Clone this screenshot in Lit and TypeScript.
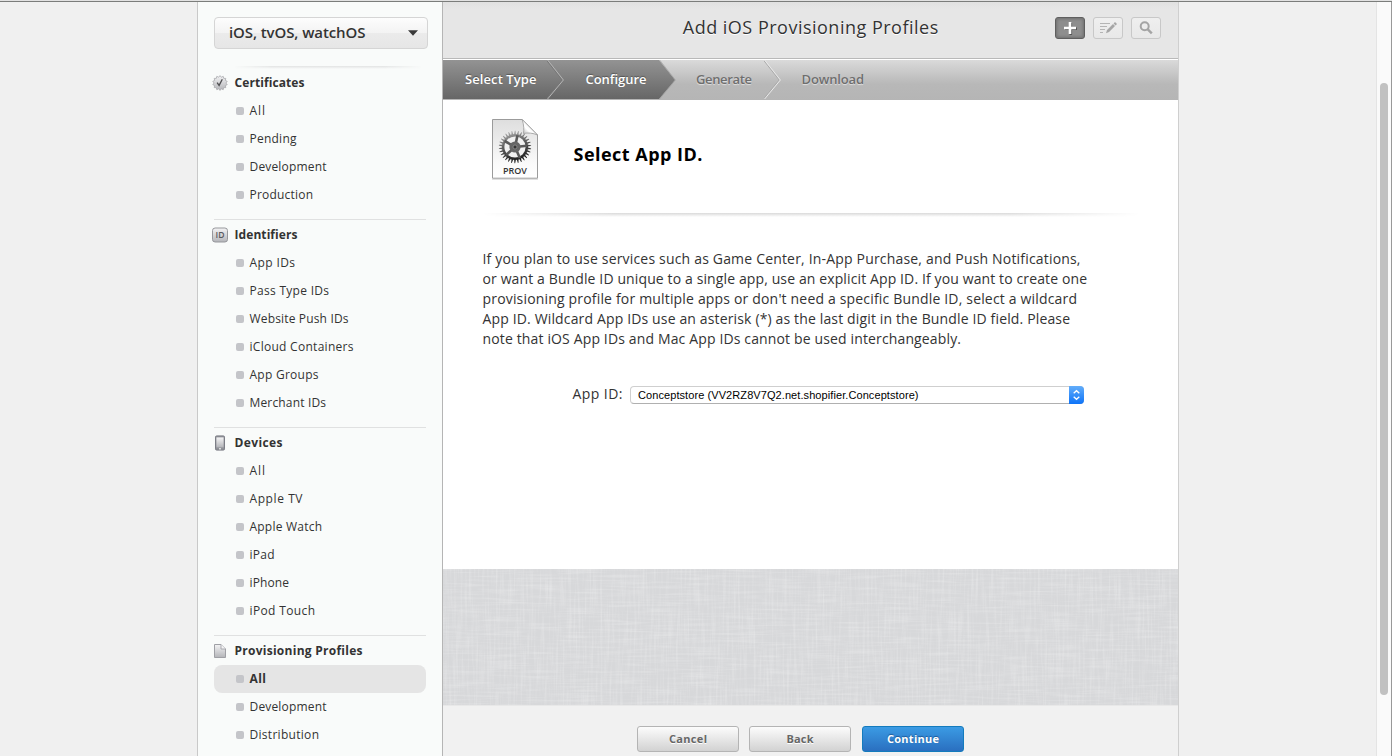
import { LitElement, html, svg, css } from "lit";
import { customElement, property } from "lit/decorators.js";

/** A one-line label whose tracking is set so that it fills the given measure. */
@customElement("tracked-label")
class TrackedLabel extends LitElement {
  @property() text = "";
  @property({ type: Number }) measure = 0;

  static styles = css`
    :host { display: inline-block; white-space: nowrap; }
  `;

  render() {
    return html`<span>${this.text}</span>`;
  }

  updated() {
    const span = this.renderRoot.querySelector("span")!;
    span.style.letterSpacing = "0px";
    const natural = span.getBoundingClientRect().width;
    const gaps = Math.max(1, this.text.length - 1);
    span.style.letterSpacing = (this.measure - natural) / gaps + "px";
    this.style.width = this.measure + "px";
  }
}

const label = (text: string, measure: number) =>
  html`<tracked-label .text=${text} .measure=${measure}></tracked-label>`;

const sealPoints = Array.from({ length: 28 }, (_, i) => {
  const r = i % 2 ? 5.9 : 7.4;
  const a = (i * Math.PI) / 14;
  return `${(8 + r * Math.sin(a)).toFixed(2)},${(8 - r * Math.cos(a)).toFixed(2)}`;
}).join(" ");

const gearPoints = Array.from({ length: 30 }, (_, i) => {
  const p = (r: number, d: number) => {
    const a = ((i + d) * Math.PI) / 15;
    return `${(r * Math.sin(a)).toFixed(2)},${(-r * Math.cos(a)).toFixed(2)}`;
  };
  return `${p(13, -0.3)} ${p(16.2, -0.05)} ${p(16.2, 0.15)} ${p(13, 0.3)}`;
}).join(" ");

const shade = svg`<defs><linearGradient id="g" x1="0" y1="0" x2="0" y2="1">
  <stop offset="0" stop-color="#f4f4f5"/><stop offset="1" stop-color="#b4b5b9"/></linearGradient></defs>`;

const icons: Record<string, unknown> = {
  seal: html`<svg width="16" height="16" viewBox="0 0 16 16">${shade}
    <polygon points=${sealPoints} fill="url(#g)" stroke="#a9aaad" stroke-width=".8"/>
    <path d="M5.1 7.6 7.1 10.4 10.3 4.2" fill="none" stroke="#505052" stroke-width="1.3"/></svg>`,
  id: html`<svg width="16" height="16" viewBox="0 0 16 16">${shade}
    <rect x=".5" y="1" width="15" height="14" rx="2.6" fill="url(#g)" stroke="#97989c"/>
    <text x="8" y="11.1" text-anchor="middle" font-family="Open Sans, sans-serif" font-weight="600" font-size="8.6" fill="#58595d">ID</text></svg>`,
  device: html`<svg width="16" height="16" viewBox="0 0 16 16">${shade}
    <rect x="3.500" y=".9" width="9" height="14.200" rx="1.200" fill="#909298" stroke="#7c7e86"/>
    <rect x="4.400" y="2.400" width="7.200" height="10" fill="url(#g)"/>
    <rect x="7" y="13.200" width="2" height="1.200" fill="#eee"/></svg>`,
  page: html`<svg width="16" height="16" viewBox="0 0 16 16">${shade}
    <path d="M2.500 1.500H9L13.500 6V14.500H2.500Z" fill="url(#g)" stroke="#9fa0a5"/>
    <path d="M9 1.500V6H13.500" fill="#f4f4f5" stroke="#a3a4a9" stroke-width=".9"/></svg>`,
};

type Row = [text: string, measure: number];
const sections: { icon: string; title: Row; rows: Row[]; selected?: number }[] = [
  { icon: "seal", title: ["Certificates", 70],
    rows: [["All", 15.5], ["Pending", 47], ["Development", 77], ["Production", 63.5]] },
  { icon: "id", title: ["Identifiers", 63],
    rows: [["App IDs", 45.5], ["Pass Type IDs", 79.5], ["Website Push IDs", 99],
      ["iCloud Containers", 104], ["App Groups", 69], ["Merchant IDs", 76.5]] },
  { icon: "device", title: ["Devices", 48],
    rows: [["All", 15.5], ["Apple TV", 53], ["Apple Watch", 72.5], ["iPad", 25], ["iPhone", 39.5], ["iPod Touch", 65.5]] },
  { icon: "page", title: ["Provisioning Profiles", 128], selected: 0,
    rows: [["All", 16.5], ["Development", 77], ["Distribution", 69.5]] },
];

const steps: { text: Row; state: string; width: number; pad: number }[] = [
  { text: ["Select Type", 71.5], state: "done", width: 104, pad: 22 },
  { text: ["Configure", 61], state: "now", width: 112, pad: 38.5 },
  { text: ["Generate", 56], state: "next", width: 105, pad: 37 },
  { text: ["Download", 62.5], state: "next last", width: 120, pad: 37.5 },
];

const paragraph: Row[] = [
  ["If you plan to use services such as Game Center, In-App Purchase, and Push Notifications,", 598],
  ["or want a Bundle ID unique to a single app, use an explicit App ID. If you want to create one", 604.5],
  ["provisioning profile for multiple apps or don't need a specific Bundle ID, select a wildcard", 594.5],
  ["App ID. Wildcard App IDs use an asterisk (*) as the last digit in the Bundle ID field. Please", 587.5],
  ["note that iOS App IDs and Mac App IDs cannot be used interchangeably.", 478.5],
];

@customElement("side-nav")
class SideNav extends LitElement {
  static styles = css`
    :host { display: block; box-sizing: border-box; width: 246px; padding: 15px 15px 0 16px;
      background: #f9fbfa; border-left: 1px solid #c9c9c9; border-right: 1px solid #b5b5b5;
      color: #333; font-size: 12px; }
    .picker { display: flex; align-items: center; justify-content: space-between; box-sizing: border-box;
      width: 214px; height: 32px; padding: 0 9px 1px 14px; border: 1px solid #d5d5d5; border-radius: 4px;
      background: linear-gradient(#fdfdfd, #f3f3f3 50%, #ebebeb 51%, #e6e6e6);
      font-size: 15px; font-weight: 600; color: #333; }
    .picker tracked-label { padding-bottom: 1px; }
    .picker svg { margin-top: 1px; }
    .rule { height: 3px; margin: 17px 5px 0 20px; background: linear-gradient(#e2e3e3, #f9fbfa);
      mask-image: linear-gradient(90deg, transparent, #000 20%, #000 80%, transparent); }
    section { width: 212px; }
    section + section { border-top: 1px solid #e0e1e1; margin-top: 10px; padding-top: 1px; }
    .title, .row { display: flex; align-items: center; height: 28px; }
    .title { font-weight: 700; margin-left: -2px; gap: 6.500px; color: #333; }
    .title tracked-label, .row tracked-label { padding-bottom: 2px; }
    .row { box-sizing: border-box; padding-left: 22px; gap: 5.500px; }
    .row::before { content: ""; width: 8px; height: 8px; border-radius: 2px; background: #c4c5c9; }
    .selected { background: #e5e5e5; border-radius: 8px; font-weight: 700; }
    svg { display: block; }
  `;
  render() {
    return html`
      <div class="picker">${label("iOS, tvOS, watchOS", 136.5)}
        <svg width="10" height="6" viewBox="0 0 10 6"><path d="M0 .3H10L5 5.700Z" fill="#3a3a3a"/></svg></div>
      <div class="rule"></div>
      ${sections.map((s) => html`<section>
        <div class="title">${icons[s.icon]}${label(...s.title)}</div>
        ${s.rows.map((r, i) => html`<div class="row ${i === s.selected ? "selected" : ""}">${label(...r)}</div>`)}
      </section>`)}`;
  }
}

@customElement("app-root")
class AppRoot extends LitElement {
  static styles = css`
    :host { display: flex; flex-direction: column; box-sizing: border-box; height: 756px; overflow: hidden;
      background: #f0f0f0; font-family: "Open Sans", "Noto Sans", sans-serif; color: #333; }
    .edge { flex: none; height: 1px; background: #e2e2e2; border-bottom: 1px solid #7b7d7b; }
    .body { flex: 1; display: flex; min-height: 0; }
    side-nav { flex: none; margin-left: 197px; }
    main { flex: none; width: 735px; display: flex; flex-direction: column; border-right: 1px solid #cfcfcf; }
    .track { margin-left: auto; width: 14px; background: #fafafa; border-left: 1px solid #e4e4e4;
      border-right: 1px solid #999; }
    .thumb { width: 8px; height: 612px; margin: 81px 0 0 3px; border-radius: 4px; background: #c1c1c1; }
    header { display: grid; grid-template-columns: 1fr auto 1fr; height: 56px; background: linear-gradient(#e1e1e1, #e6e6e6 7px);
      border-bottom: 1px solid #b9b9b9; box-shadow: 0 1px #fff; }
    h1 { grid-column: 2; margin: 0; font-size: 18px; font-weight: 400; line-height: 51px; color: #333;
      text-shadow: 0 1px #fff; }
    .tools { display: flex; justify-content: flex-end; gap: 8px; padding: 15px 17px 0 0; }
    .tool { display: grid; place-items: center; box-sizing: border-box; width: 30px; height: 22px;
      border: 1px solid #c8c8c8; border-radius: 3px; background: linear-gradient(#efefef, #e8e8e8); }
    .add { border-color: #5f5f5f; background: #8e8e8e; box-shadow: inset 0 0 3px 1px #6f6f6f; }
    .wizard { display: flex; height: 40px; margin-top: 1px; background: linear-gradient(#dadada, #b8b8b8 60%, #b5b5b5); }
    .step { position: relative; display: flex; align-items: center; box-sizing: border-box; height: 39px;
      font-size: 13px; font-weight: 600; color: #6e6e6e; text-shadow: 0 1px 1px rgba(255,255,255,.6); }
    .done, .now { background: linear-gradient(#939393, #666); color: #fff; text-shadow: 0 -1px 1px rgba(0,0,0,.35); }
    .chevron { position: absolute; left: 100%; top: 0; z-index: 1; }
    .last .chevron { display: none; }
    .step tracked-label { margin-top: -1px; }
    .panel { height: 469px; background: #fff; }
    .intro { display: flex; padding: 17px 0 0 47px; height: 95px; }
    h2 { margin: 23px 0 0 33.500px; font-size: 18px; line-height: 28px; font-weight: 700; color: #000; }
    .rule { height: 4px; margin: 1px 38px 0 39px; background: linear-gradient(#dadada, #fff);
      mask-image: linear-gradient(90deg, transparent, #000 20%, #000 80%, transparent); }
    .copy { margin: 32px 0 0 39.500px; font-size: 14px; line-height: 20px; }
    .copy tracked-label { display: block; }
    .field { display: flex; align-items: center; margin: 35px 0 0 129.500px; height: 20px; font-size: 14px; gap: 7.500px; }
    .field > tracked-label { padding-bottom: 2px; }
    .select { display: flex; justify-content: space-between; box-sizing: border-box; width: 454px; height: 18px; margin-top: 2px;
      border: 1px solid #cfcfcf; border-bottom-color: #b0b0b0; border-radius: 4px; padding-left: 7px;
      font: 11px/16px "Liberation Sans", sans-serif; color: #000; }
    .arrows { margin: -1px; width: 15px; height: 18px; border-radius: 0 4px 4px 0; background: linear-gradient(#62adfa, #0d73f8); }
    .linen { display: block; width: 735px; height: 136px; background: #d7d8da; }
    footer { flex: 1; display: flex; align-items: flex-start; padding: 20px 0 0 184px; border-top: 1px solid #e8e8e8;
      background: #f1f1f1; }
    button { box-sizing: border-box; width: 102px; height: 26px; padding: 0; margin-left: 10px; border: 1px solid #b4b4b4;
      border-radius: 3px; background: linear-gradient(#fcfcfc, #d2d2d2); color: #666;
      font: 700 11px/24px "Open Sans", sans-serif; text-shadow: 0 1px #fff; }
    .primary { margin-left: 11px; border-color: #147bbd; background: linear-gradient(#3b9be4, #2a6fc0); color: #fff;
      text-shadow: 0 -1px 1px rgba(0,40,90,.5); }
  `;

  chevron(state: string) {
    const now = state === "now";
    const fill = state === "done" || now ? "url(#dark)" : "none";
    return html`<svg class="chevron" width="17" height="39" viewBox="0 0 17 39">
      <defs><linearGradient id="dark" x1="0" y1="0" x2="0" y2="1"><stop offset="0" stop-color="#939393"/><stop offset="1" stop-color="#666"/></linearGradient></defs>
      <path d="M0 0 16 20 0 39Z" fill=${fill}/>
      ${now ? svg`<path d="M.6 0 16.400 20 .6 39" fill="none" stroke="#999" stroke-opacity=".6"/>` : svg`
        <path d="M-.6 0 15.200 20-.6 39" fill="none" stroke=${state === "done" ? "#777" : "#aaa"}/>
        <path d="M.6 0 16.400 20 .6 39" fill="none" stroke=${state === "done" ? "#b5b5b5" : "#e9e9e9"}/>`}
    </svg>`;
  }

  documentIcon() {
    return html`<svg width="50" height="64" viewBox="0 0 50 64">
      <defs>
        <linearGradient id="sheet" x1="0" y1="0" x2="0" y2="1"><stop offset="0" stop-color="#dedede"/><stop offset=".75" stop-color="#fafafa"/><stop offset="1" stop-color="#fff"/></linearGradient>
        <linearGradient id="metal" x1="0" y1="0" x2=".3" y2="1"><stop offset="0" stop-color="#bbb"/><stop offset=".5" stop-color="#606060"/><stop offset="1" stop-color="#1d1d1d"/></linearGradient>
        <linearGradient id="fold" x1="0" y1="1" x2="1" y2="0"><stop offset="0" stop-color="#aaa"/><stop offset=".35" stop-color="#fff"/><stop offset="1" stop-color="#ddd"/></linearGradient>
      </defs>
      <path d="M2 62.200H48" stroke="#000" stroke-opacity=".18"/>
      <path d="M2.500 2.500H32.200L47.500 18V61.200H2.500Z" fill="url(#sheet)" stroke="#9b9b9b"/>
      <g transform="translate(25 30)">
        <polygon points=${gearPoints} fill="url(#metal)"/>
        <circle r="10.600" fill="#f1f1f1"/>
        ${[12, 84, 156, 228, 300].map((a) => svg`<path d="M0 0V-12" stroke="#5a5a5a" stroke-width="2.600" transform="rotate(${a})"/>`)}
        <circle r="5.600" fill="#666"/><circle r="2" fill="#333" stroke="#999" stroke-width=".7"/>
      </g>
      <path d="M32.200 2.500C34 8 34 13 33.500 16.500 38 15.500 43 16 47.500 18Z" fill="url(#fold)" stroke="#999" stroke-width=".8"/>
      <text x="25" y="57" text-anchor="middle" font-family="Open Sans, sans-serif" font-weight="600" font-size="9" fill="#333">PROV</text>
    </svg>`;
  }

  linen() {
    return html`<svg class="linen" width="735" height="136">
      <defs>
        <filter id="weft" x="0" y="0" width="100%" height="100%" color-interpolation-filters="sRGB">
          <feTurbulence type="fractalNoise" baseFrequency=".025 .45" numOctaves="2" seed="4"/>
          <feColorMatrix values="0 0 0 0 1 0 0 0 0 1 0 0 0 0 1 .9 0 0 0 -.38"/>
        </filter>
        <filter id="warp" x="0" y="0" width="100%" height="100%" color-interpolation-filters="sRGB">
          <feTurbulence type="fractalNoise" baseFrequency=".45 .025" numOctaves="2" seed="9"/>
          <feColorMatrix values="0 0 0 0 1 0 0 0 0 1 0 0 0 0 1 .9 0 0 0 -.38"/>
        </filter>
      </defs>
      <rect width="735" height="136" filter="url(#weft)" opacity=".5"/>
      <rect width="735" height="136" filter="url(#warp)" opacity=".5"/>
    </svg>`;
  }

  render() {
    return html`
      <div class="edge"></div>
      <div class="body">
        <side-nav></side-nav>
        <main>
          <header>
            <h1>${label("Add iOS Provisioning Profiles", 255.5)}</h1>
            <div class="tools">
              <div class="tool add"><svg width="14" height="14" viewBox="0 0 14 14">
                <path d="M7.800 2V14M2 7.800H14" stroke="#555" stroke-width="2.600"/>
                <path d="M7 1V13M1 7H13" stroke="#fff" stroke-width="2.600"/></svg></div>
              <div class="tool"><svg width="18" height="14" viewBox="0 0 18 14">
                <path d="M1 2.500H11M1 5.500H8M1 8.500H6M1 11.500H4" stroke="#b4b4b4" stroke-width="1.100"/>
                <path d="M7 12.300 8 9 14 3 16 5 10 11ZM14.600 2.400 16 1 18 3 16.600 4.400Z" fill="#a6a6a6"/></svg></div>
              <div class="tool"><svg width="14" height="14" viewBox="0 0 14 14">
                <circle cx="5.700" cy="5.200" r="4" fill="none" stroke="#a4a4a4" stroke-width="2"/>
                <path d="M8.800 8.300 12.800 12.300" stroke="#a4a4a4" stroke-width="2.400"/></svg></div>
            </div>
          </header>
          <div class="wizard">
            ${steps.map((s) => html`<div class="step ${s.state}" style="width:${s.width}px;padding-left:${s.pad}px">
              ${label(...s.text)}${this.chevron(s.state)}</div>`)}
          </div>
          <div class="panel">
            <div class="intro">${this.documentIcon()}<h2>${label("Select App ID.", 129)}</h2></div>
            <div class="rule"></div>
            <div class="copy">${paragraph.map((p) => label(...p))}</div>
            <div class="field">${label("App ID:", 50)}
              <div class="select">${label("Conceptstore (VV2RZ8V7Q2.net.shopifier.Conceptstore)", 280.5)}
                <svg class="arrows" viewBox="0 0 15 18"><path d="M4.700 7.300 7.500 4.700 10.300 7.300M4.700 10.700 7.500 13.300 10.300 10.700" fill="none" stroke="#fff" stroke-width="1.300"/></svg>
              </div>
            </div>
          </div>
          ${this.linen()}
          <footer>
            <button>${label("Cancel", 38)}</button>
            <button>${label("Back", 27)}</button>
            <button class="primary">${label("Continue", 52)}</button>
          </footer>
        </main>
        <div class="track"><div class="thumb"></div></div>
      </div>`;
  }
}
